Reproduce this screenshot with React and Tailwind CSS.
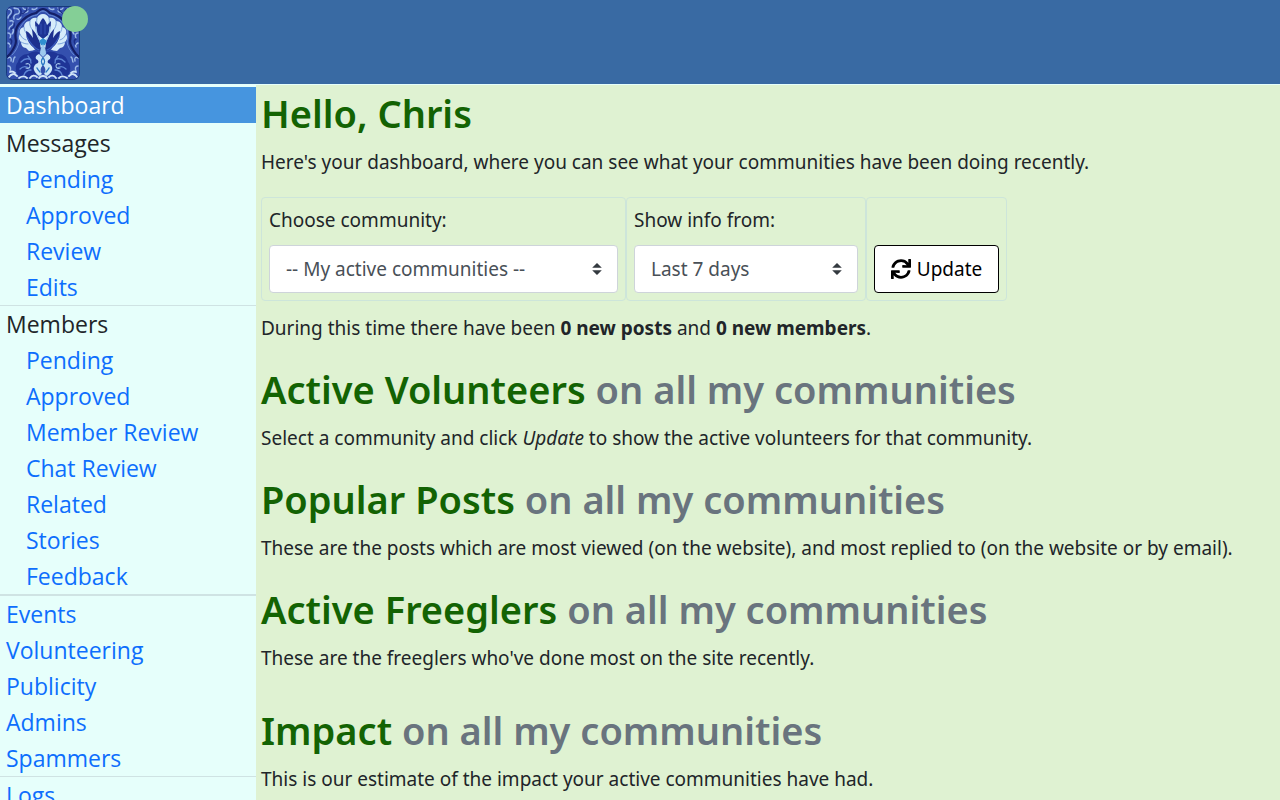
import React from 'react';

const menuGroups = [
  {
    id: 'messages',
    title: 'Messages',
    items: ['Pending', 'Approved', 'Review', 'Edits'],
    border: 'border-b',
  },
  {
    id: 'members',
    title: 'Members',
    items: ['Pending', 'Approved', 'Member Review', 'Chat Review', 'Related', 'Stories', 'Feedback'],
    border: 'border-b-2',
  },
  {
    id: 'community',
    items: ['Events', 'Volunteering', 'Publicity', 'Admins', 'Spammers'],
    border: 'border-b',
  },
  {
    id: 'system',
    items: ['Logs'],
    border: '',
  },
];

const sections = [
  {
    title: 'Active Volunteers',
    gap: 'mt-[22px]',
    text: (
      <>
        Select a community and click <em>Update</em> to show the active volunteers for that community.
      </>
    ),
  },
  {
    title: 'Popular Posts',
    gap: 'mt-[22px]',
    text: 'These are the posts which are most viewed (on the website), and most replied to (on the website or by email).',
  },
  {
    title: 'Active Freeglers',
    gap: 'mt-[22px]',
    text: "These are the freeglers who've done most on the site recently.",
  },
  {
    title: 'Impact',
    gap: 'mt-[33px]',
    text: 'This is our estimate of the impact your active communities have had.',
  },
];

// One side of the tile; drawn twice, mirrored
const TileHalf = () => (
  <g strokeLinecap="round" fill="none">
    {/* corner scrollwork */}
    <g stroke="#9dbbe8" strokeWidth="1.4">
      <path d="M2 3c3 0 4 2 3 4s-3 2-3 5M8 2c2 1 4 0 5 2s0 4-2 4-4 2-3 5M17 2c1 2 4 2 5 0M16 8c2-2 5-1 6-3M4 15c3-1 4 1 3 3s-4 2-4 5M11 13c1 1 3 0 4-2M2 27c3 0 3 3 2 5M7 23c1 2 0 4-1 5M2 37c2 1 3 2 2 4M26 3c2 1 4 0 5-1" />
      <path d="M2 52c2-2 4 0 3 3M2 60c3 0 3 3 2 5M7 56c1-2 0-4 2-5" />
    </g>
    <g stroke="#1b2f86" strokeWidth="1.4">
      <path d="M7 4c1 3-1 6-3 8M14 3c2 2 1 5 0 7M21 2c0 3-3 5-5 6M8 17c1 3-1 5-3 6M4 33c2 1 2 3 1 5" />
    </g>
    {/* arch round the flower */}
    <path d="M37 3c-3 0-5 2-7 4-6 1-12 5-17 11-4 5-4 12-3 17 0 5-3 9-6 13l-3 3" stroke="#141f66" strokeWidth="2.2" />
    <path d="M37 5c-3 0-4 2-6 4-7 1-12 5-16 11-4 5-3 11-2 16-1 5-3 9-7 13" stroke="#6d92d9" strokeWidth="0.9" />
    {/* outer petals */}
    <path
      d="M37 8c-3 0-5 2-6 4-4-1-6 1-7 3-4 0-6 3-6 6-4 1-5 4-4 7-2 3-1 6 1 8 0 3 2 6 5 6l3 3c3 0 5-1 7-2l7-2z"
      fill="#d6ecfa"
    />
    <path d="M31 12c-1 4 0 6 1 9M24 15c-1 4 1 7 3 10M18 21c0 4 2 6 4 8M14 28c1 3 3 5 6 6M15 36c2 1 4 2 7 2" stroke="#7ba4dd" strokeWidth="1" />
    {/* dark leaves */}
    <path d="M37 12c-2 2-3 4-4 7-2-2-3-3-4-4 0 6 1 10 3 14l5 4z" fill="#1d3394" />
    <path d="M20 25c3 1 5 4 7 7l-1-9c4 4 7 9 8 14l1 8c-3 0-6-1-8-4-4-3-7-9-7-16z" fill="#1c308e" />
    <path d="M21 31c3 6 7 11 12 13" stroke="#3c5fc0" strokeWidth="1.2" />
    <path d="M30 21c0 5 2 11 5 15" stroke="#a9ccf0" strokeWidth="1.4" />
    <path d="M35 18v10" stroke="#3453b4" strokeWidth="1" />
    <path d="M37 32l-4 3 2 4 2 1z" fill="#2f8fd0" />
    <path d="M37 38c-2 3-3 6-3 10l3 3z" fill="#9dc9ee" />
    {/* lower rosette */}
    <path d="M33 46c-5-1-8 0-11 2-5 0-9 3-10 8-3 3-3 9 0 13 5 3 12 3 17 0 4-3 6-8 6-14z" fill="#1e3496" />
    <path d="M15 56c3-3 7-4 10-2M14 63c3-3 6-3 9-1M18 69c1-3 4-5 7-5M22 50c2 2 3 4 3 7" stroke="#5f87d6" strokeWidth="1.3" />
    <path d="M20 58c2-1 4 0 4 2s-2 3-4 2" stroke="#a8c9ee" strokeWidth="1.1" />
    <path d="M33 48c-3 1-4 3-3 5 2 1 3 2 2 4-3 1-5 4-4 7s3 4 5 6l3-2c-2-3-2-6 1-9v-7z" fill="#cbe5f7" />
    <path d="M37 52c-2 2-2 5 0 7M31 62c1 2 2 3 3 4" stroke="#2b77c4" strokeWidth="1.4" />
    {/* bottom edge */}
    <path d="M3 71c2-3 5-4 8-1M13 72c3-2 6-2 8 0M24 72c2-3 5-3 7-1M33 72c1-2 2-2 4-2M4 66c2-1 4 0 5 1" stroke="#cfe4f7" strokeWidth="1.8" />
  </g>
);

const Logo = () => (
  <svg viewBox="0 0 74 74" className="h-[74px] w-[74px] rounded-md" role="img" aria-label="ModTools">
    <rect width="74" height="74" fill="#3450ae" />
    <TileHalf />
    <g transform="translate(74 0) scale(-1 1)">
      <TileHalf />
    </g>
    <rect x="0.5" y="0.5" width="73" height="73" rx="6" fill="none" stroke="#173b7c" />
  </svg>
);

const SelectBox = ({ id, label, options }) => (
  <div>
    <label htmlFor={id} className="block h-[30px]">
      {label}
    </label>
    <div className="relative mt-2.5">
      <select
        id={id}
        className="h-12 w-full appearance-none rounded border border-[#ced4da] bg-white px-4 text-[#495057]"
      >
        {options.map((option) => (
          <option key={option}>{option}</option>
        ))}
      </select>
      <svg viewBox="0 0 4 5" className="pointer-events-none absolute top-[18px] right-4 h-3 w-2.5">
        <path fill="#343a40" d="M2 0L0 2h4zm0 5L0 3h4z" />
      </svg>
    </div>
  </div>
);

const RefreshIcon = () => (
  <svg viewBox="0 0 512 512" className="h-5 w-5" fill="currentColor" aria-hidden="true">
    <path d="M440.65 12.57l4 82.77A247.16 247.16 0 0 0 255.83 8C134.73 8 33.91 94.92 12.29 209.82A12 12 0 0 0 24.09 224h49.05a12 12 0 0 0 11.67-9.26 175.91 175.91 0 0 1 317-56.94l-101.46-4.86a12 12 0 0 0-12.57 12v47.41a12 12 0 0 0 12 12H500a12 12 0 0 0 12-12V12a12 12 0 0 0-12-12h-47.37a12 12 0 0 0-11.98 12.57zM255.83 432a175.61 175.61 0 0 1-146-77.8l101.8 4.87a12 12 0 0 0 12.57-12v-47.4a12 12 0 0 0-12-12H12a12 12 0 0 0-12 12V500a12 12 0 0 0 12 12h47.35a12 12 0 0 0 12-12.6l-4.15-82.57A247.17 247.17 0 0 0 255.83 504c121.11 0 221.93-86.92 243.55-201.82a12 12 0 0 0-11.8-14.18h-49.05a12 12 0 0 0-11.67 9.26A175.86 175.86 0 0 1 255.83 432z" />
  </svg>
);

const Sidebar = () => (
  <nav className="w-64 shrink-0 bg-[#e6fffb] pt-0.5 text-[23px] leading-9">
    <a href="#dashboard" className="mb-0.5 block bg-[#4695df] px-1.5 text-white">
      Dashboard
    </a>
    {menuGroups.map((group) => (
      <div key={group.id} className={`border-[#cfe3e3] ${group.border}`}>
        {group.title && <div className="px-1.5">{group.title}</div>}
        <ul className={group.title ? 'pl-5' : ''}>
          {group.items.map((item) => (
            <li key={item}>
              <a href="#menu" className="block px-1.5 text-[#0d6efd]">
                {item}
              </a>
            </li>
          ))}
        </ul>
      </div>
    ))}
  </nav>
);

const App = () => {
  return (
    <div className="flex h-screen flex-col overflow-hidden bg-[#dff2d2] font-['Open_Sans','Noto_Sans',sans-serif] text-[#212529]">
      <header className="h-[85px] shrink-0 border-b border-[#e6fffb] bg-[#396aa3] px-1.5 pt-1.5">
        <a href="#home" className="relative block w-[74px]">
          <Logo />
          <span className="absolute top-0 -right-2 h-[26px] w-[26px] rounded-full bg-[#84cf96]" />
        </a>
      </header>

      <div className="flex min-h-0 flex-1 items-stretch">
        <Sidebar />

        <main className="min-w-0 flex-1 px-[5px] pt-1 font-['Noto_Sans','Open_Sans',sans-serif] text-[19px] leading-[30px]">
          <h1 className="text-[38px] leading-[48px] font-semibold text-[#136303]">Hello, Chris</h1>
          <p className="mt-2.5">
            Here's your dashboard, where you can see what your communities have been doing recently.
          </p>

          <form className="mt-5 flex" onSubmit={(e) => e.preventDefault()}>
            <div className="w-[365px] rounded border border-[#cde5da] p-[7px]">
              <SelectBox
                id="community"
                label="Choose community:"
                options={['-- My active communities --', '-- All my communities --']}
              />
            </div>
            <div className="w-60 rounded border border-[#cde5da] p-[7px]">
              <SelectBox id="period" label="Show info from:" options={['Last 7 days', 'Last 30 days']} />
            </div>
            <div className="flex w-[141px] items-end rounded border border-[#cde5da] p-[7px]">
              <button
                type="submit"
                className="flex h-12 w-full items-center justify-center gap-1.5 rounded border border-black bg-white text-black"
              >
                <RefreshIcon />
                Update
              </button>
            </div>
          </form>

          <p className="mt-3">
            During this time there have been <strong>0 new posts</strong> and <strong>0 new members</strong>.
          </p>

          {sections.map((section) => (
            <section key={section.title} className={section.gap}>
              <h2 className="text-[38px] leading-[48px] font-semibold text-[#136303]">
                {section.title} <span className="text-[#69747e]">on all my communities</span>
              </h2>
              <p className="mt-2.5 whitespace-nowrap">{section.text}</p>
            </section>
          ))}
        </main>
      </div>
    </div>
  );
};

export default App;
